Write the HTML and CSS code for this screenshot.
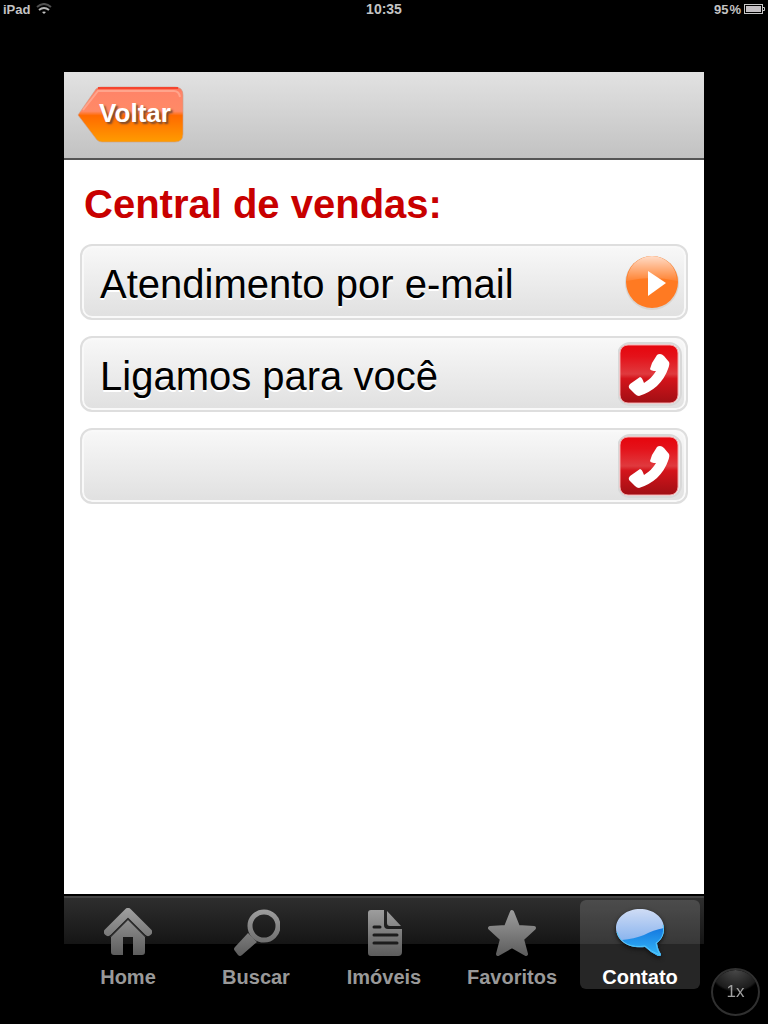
FILE: index.html
```html
<!DOCTYPE html>
<html lang="pt-BR">
<head>
<meta charset="utf-8">
<meta name="viewport" content="width=device-width, initial-scale=1">
<title>Central de vendas</title>
<link rel="stylesheet" href="styles.css">
</head>
<body>
<svg class="defs" width="0" height="0" aria-hidden="true">
  <defs>
    <linearGradient id="steel" gradientUnits="userSpaceOnUse" x1="0" y1="0" x2="0" y2="48">
      <stop offset="0" stop-color="#a0a0a0"/><stop offset="1" stop-color="#5c5c5c"/>
    </linearGradient>
    <linearGradient id="arrow" x1="0" y1="0" x2="0" y2="1">
      <stop offset="0" stop-color="#ff6f57"/><stop offset="0.1" stop-color="#ff8468"/><stop offset="0.44" stop-color="#ff8a66"/>
      <stop offset="0.52" stop-color="#ff6a00"/><stop offset="1" stop-color="#ff9c00"/>
    </linearGradient>
    <linearGradient id="gloss" x1="0" y1="0" x2="0" y2="1">
      <stop offset="0" stop-color="#ffdcc8"/><stop offset="1" stop-color="#ff8332"/>
    </linearGradient>
    <linearGradient id="red" x1="0" y1="0" x2="0" y2="1">
      <stop offset="0" stop-color="#e6050d"/><stop offset="0.2" stop-color="#e4121a"/><stop offset="0.5" stop-color="#e03a3e"/>
      <stop offset="0.58" stop-color="#d4141b"/><stop offset="1" stop-color="#a00f14"/>
    </linearGradient>
    <linearGradient id="sky" x1="0" y1="0" x2="0" y2="1">
      <stop offset="0" stop-color="#cfdcf5"/><stop offset="0.7" stop-color="#86b2ee"/>
    </linearGradient>
    <linearGradient id="sea" x1="0" y1="0" x2="0" y2="1">
      <stop offset="0" stop-color="#1478e0"/><stop offset="1" stop-color="#35b8f8"/>
    </linearGradient>
    <symbol id="phone" viewBox="0 0 64 64">
      <rect x="0" y="1" width="63" height="62" rx="12" fill="#ececec" stroke="#d8d8d8" stroke-width="2"/>
      <rect x="2" y="3" width="58" height="58" rx="8" fill="url(#red)" stroke="#f3a3a5"/>
      <path d="M42 12 Q44 12 46 14 L51 20 Q52 22 50 27 Q47 36 39 44 Q31 51 21 54 Q19 54 17 52 L11 46 Q10 44 12 42 L22 35 Q24 35 26 41 Q34 36 38 29 Q33 29 32 27 L34 21 L39 13 Q40 12 42 12 Z" fill="#fff"/>
    </symbol>
  </defs>
</svg>

<header class="status">
  <div class="status-left">
    <span>iPad</span>
    <svg width="16" height="12" viewBox="0 0 16 12" fill="none" stroke-width="2" aria-hidden="true">
      <path d="M1 4 Q8 -2 15 4" stroke="#505050"/>
      <path d="M3 7 Q8 3 13 7" stroke="#b8b8b8"/>
      <path d="M6 9 Q8 8 10 9 L8 11 Z" fill="#c4c4c4"/>
    </svg>
  </div>
  <time>10:35</time>
  <div class="status-right">
    <span class="charge"><span>95</span><span>%</span></span>
    <svg width="21" height="10" viewBox="0 0 21 10" aria-hidden="true">
      <rect x="0.5" y="0.5" width="18" height="9" fill="none" stroke="#c8c8c8"/>
      <rect x="2" y="2" width="15" height="6" fill="#c4c0c4"/>
      <path d="M19 3.500 H20.500 V6.500 H19" fill="none" stroke="#c8c8c8"/>
    </svg>
  </div>
</header>

<div class="app">
  <div class="navbar">
    <button class="back" type="button">
      <svg class="back-shape" width="110" height="62" viewBox="0 0 110 62" aria-hidden="true">
        <path d="M2 31 L20 5 Q22 3 25 3 H99 Q107 3 107 11 V50 Q107 58 99 58 H26 Q23 58 21 56 Z" fill="url(#arrow)" stroke="#c9a08e" stroke-opacity="0.6"/>
        <path d="M22 4 H102" stroke="#f5452f" stroke-width="2"/>
        <path d="M7 26 L22 7 H98 Q103 7 104 13" fill="none" stroke="#ffa48c" stroke-width="2"/>
      </svg>
      <span class="back-label">Voltar</span>
    </button>
  </div>

  <main class="content">
    <h1>Central de vendas:</h1>
    <button class="row" type="button">
      <span>Atendimento por e-mail</span>
      <svg class="row-icon" width="64" height="64" viewBox="0 0 64 64" aria-hidden="true">
        <circle cx="34" cy="33" r="27" fill="#d9d4d0"/>
        <circle cx="34" cy="32" r="26" fill="#ff7a22"/>
        <path d="M9 31 A25 25 0 0 1 59 31 Q34 25 9 31 Z" fill="url(#gloss)"/>
        <path d="M30 21 L48 33 L30 46 Z" fill="#fff"/>
      </svg>
    </button>
    <button class="row" type="button">
      <span>Ligamos para você</span>
      <svg class="row-icon" width="64" height="64" aria-hidden="true"><use href="#phone"/></svg>
    </button>
    <button class="row" type="button" aria-label="Telefone">
      <span></span>
      <svg class="row-icon" width="64" height="64" aria-hidden="true"><use href="#phone"/></svg>
    </button>
  </main>

  <nav class="tabs">
    <a class="tab" href="#home">
      <svg width="48" height="48" viewBox="0 0 48 48" aria-hidden="true">
        <path d="M4 24 L24 4 L44 24" fill="none" stroke="url(#steel)" stroke-width="8" stroke-linecap="round" stroke-linejoin="round"/>
        <path d="M24 12 L41 29 V44 Q41 47 38 47 H29 V29 H19 V47 H10 Q7 47 7 44 V29 Z" fill="url(#steel)"/>
        <path d="M6 29 L24 11 L42 29" fill="none" stroke="#2b2b2b" stroke-width="1"/>
      </svg>
      <span>Home</span>
    </a>
    <a class="tab" href="#buscar">
      <svg width="48" height="48" viewBox="0 0 48 48" aria-hidden="true">
        <circle cx="32" cy="18" r="14" fill="none" stroke="url(#steel)" stroke-width="5"/>
        <path d="M16 25 L25 34 L10 47 Q8 49 6 47 L3 43 Q1 41 3 39 Z" fill="url(#steel)"/>
      </svg>
      <span>Buscar</span>
    </a>
    <a class="tab" href="#imoveis">
      <svg width="48" height="48" viewBox="0 0 48 48" aria-hidden="true">
        <path d="M11 2 H24 V17 Q24 21 28 21 H42 V44 Q42 48 38 48 H11 Q8 48 8 45 V5 Q8 2 11 2 Z" fill="url(#steel)"/>
        <path d="M27 3 L41 18 H30 Q27 18 27 15 Z" fill="url(#steel)"/>
        <path d="M14 19 H20 M14 27 H37 M14 35 H37" stroke="#1c1c1c" stroke-width="3" stroke-linecap="round"/>
      </svg>
      <span>Imóveis</span>
    </a>
    <a class="tab" href="#favoritos">
      <svg width="48" height="48" viewBox="0 0 48 48" aria-hidden="true">
        <path d="M24 4 L30 19 L46 20 L34 31 L38 46 L24 38 L10 46 L14 31 L2 20 L18 19 Z" fill="url(#steel)" stroke="url(#steel)" stroke-width="4" stroke-linejoin="round"/>
      </svg>
      <span>Favoritos</span>
    </a>
    <a class="tab active" href="#contato" aria-current="page">
      <svg class="bubble" width="48" height="48" viewBox="0 0 48 48" aria-hidden="true">
        <path d="M24 1 C37 1 48 9 48 20 C48 27 45 32 41 35 Q42 42 45 46 Q45 49 42 48 Q34 44 29 39 C13 41 0 33 0 20 C0 9 11 1 24 1 Z" fill="url(#sky)"/>
        <path d="M48 20 C48 27 45 32 41 35 Q42 42 45 46 Q45 49 42 48 Q34 44 29 39 Q14 41 6 32 Q18 31 28 27 Q37 22 48 20 Z" fill="url(#sea)"/>
        <path d="M47 17 C49 26 45 32 40 35 Q41 42 44 47 Q35 44 29 38 C16 40 4 36 1 24" fill="none" stroke="#55c8fa" stroke-width="1"/>
      </svg>
      <span>Contato</span>
    </a>
  </nav>
</div>

<button class="scale" type="button">1x</button>
</body>
</html>
```
FILE: styles.css
```css
* {
  box-sizing: border-box;
}

body {
  margin: 0;
  min-height: 100vh;
  display: flex;
  flex-direction: column;
  background: #000;
  font-family: "Liberation Sans", Arial, sans-serif;
}

button {
  font: inherit;
  border: 0;
  padding: 0;
  cursor: pointer;
}

svg {
  display: block;
  flex: none;
}

.defs {
  position: absolute;
}

.status {
  display: grid;
  grid-template-columns: 1fr auto 1fr;
  align-items: center;
  height: 20px;
  padding: 0 3px 2px;
  color: #c4c4c4;
  font-size: 13px;
  font-weight: bold;
}

.status time {
  font-size: 14px;
}

.status-left,
.status-right {
  display: flex;
  align-items: center;
  gap: 6px;
}

.status-right {
  justify-content: flex-end;
  gap: 3px;
}

.charge {
  display: flex;
  gap: 1px;
}

.app {
  flex: 1;
  display: flex;
  flex-direction: column;
  margin: 52px 64px 32px;
}

.navbar {
  display: flex;
  align-items: center;
  height: 88px;
  padding: 0 12px;
  background: linear-gradient(#e2e2e2, #c2c2c2);
  border-bottom: 2px solid #555;
}

.back {
  display: grid;
  place-items: center;
  background: none;
  color: #fff;
  font-size: 26px;
  font-weight: bold;
  line-height: 30px;
  text-shadow: 2px 2px 2px #7a4a30;
}

.back-shape,
.back-label {
  grid-area: 1 / 1;
}

.back-label {
  padding: 0 0 4px 8px;
}

.content {
  flex: 1;
  display: flex;
  flex-direction: column;
  gap: 16px;
  padding: 20px 16px;
  background: #fff;
}

h1 {
  margin: 0;
  padding-left: 4px;
  color: #c80000;
  font-size: 40px;
  line-height: 48px;
}

.row {
  display: flex;
  align-items: center;
  justify-content: space-between;
  height: 76px;
  padding: 0 4px 0 18px;
  border: 2px solid #dedede;
  border-radius: 12px;
  background: linear-gradient(#f8f8f8, #e0e0e0);
  box-shadow: inset 0 0 0 2px #f9f9f9;
  color: #000;
  font-size: 40px;
  line-height: 48px;
  text-align: left;
  text-shadow: 0 2px 0 #fff;
}

.row span {
  padding-top: 4px;
}

.row-icon {
  overflow: visible;
}

.tabs {
  display: grid;
  grid-template-columns: repeat(5, 1fr);
  height: 98px;
  padding: 2px 0 4px;
  border-top: 2px solid #000;
  background: linear-gradient(#444 0, #444 2px, #2e2e2e 2px, #151515 48px, #000 48px);
}

.tab {
  display: flex;
  flex-direction: column;
  align-items: center;
  gap: 9px;
  margin: 2px 4px 0;
  padding-top: 8px;
  border-radius: 6px;
  color: #999;
  font-size: 20px;
  font-weight: bold;
  line-height: 24px;
  text-decoration: none;
}

.tab.active {
  background: rgba(255, 255, 255, 0.15);
  color: #fff;
}

.bubble {
  filter: drop-shadow(0 2px 2px #111);
}

.scale {
  position: fixed;
  right: 8px;
  bottom: 8px;
  width: 49px;
  height: 48px;
  border: 2px solid #303030;
  border-radius: 50%;
  background: radial-gradient(ellipse 26px 22px at 50% 0, #484848, #1c1c1c 90%, #000 100%) padding-box;
  color: #a0a0a0;
  font-size: 17px;
}
```
